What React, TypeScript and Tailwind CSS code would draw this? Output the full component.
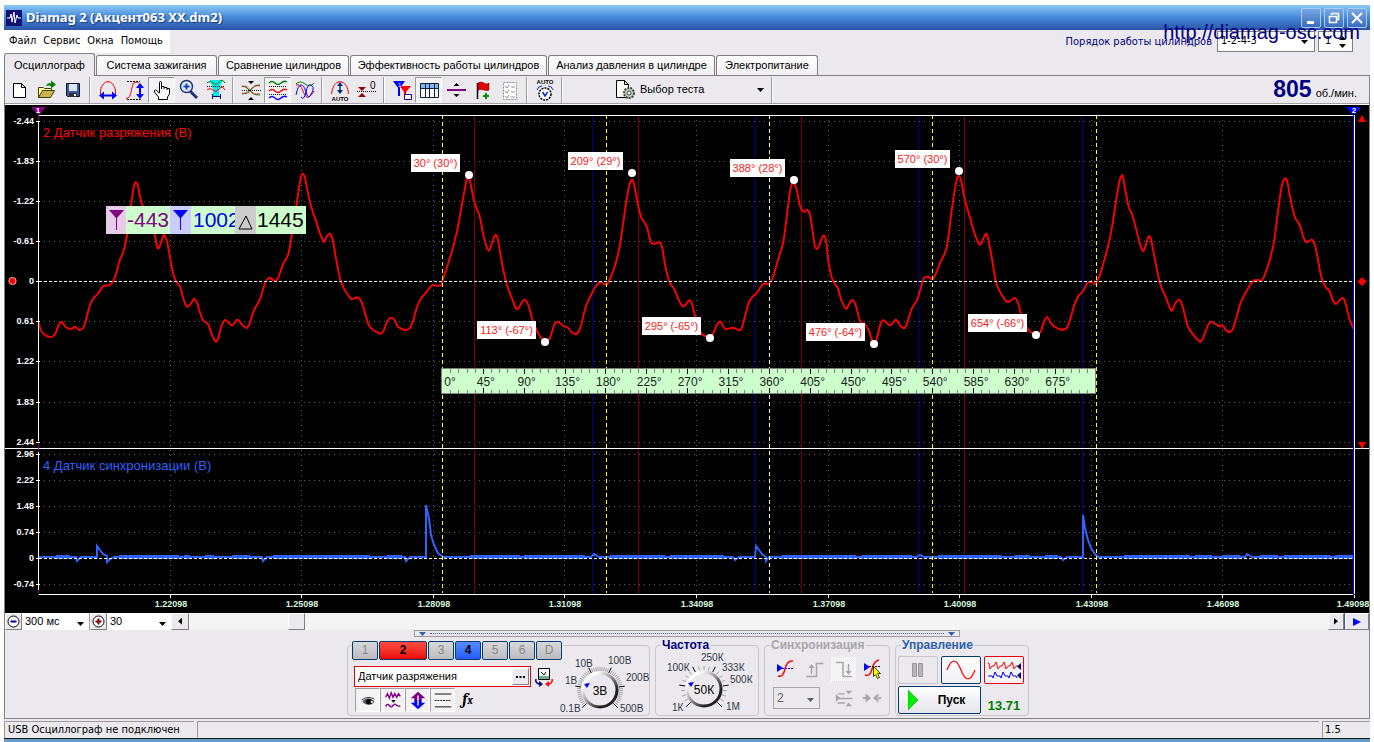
import { useState } from "react";
import type { ReactNode } from "react";

const TABS = [
	{ title: "Осциллограф", width: "w-[91px]" },
	{ title: "Система зажигания", width: "w-[121px]" },
	{ title: "Сравнение цилиндров", width: "w-[131px]" },
	{ title: "Эффективность работы цилиндров", width: "w-[197px]" },
	{ title: "Анализ давления в цилиндре", width: "w-[167px]" },
	{ title: "Электропитание", width: "w-[102px]" },
];

const CHECKER =
	"bg-[repeating-conic-gradient(#ffffff_0_25%,#ebe9ed_0_50%)] bg-[length:2px_2px]";

/* ---------- waveform data ---------- */

// Samples are stored in thirds of a pixel, relative to the segment's origin
const VACUUM = [
	{
		origin: 0,
		data: "117,668 122,690 132,702 148,711 160,708 168,697 176,674 186,666 196,680 212,687 226,681 238,690 250,683 258,660 268,622 278,598 295,580 310,558 328,556 340,543 350,515 358,485 368,460 374,440 381,405 388,350 394,310 402,258 408,247 414,258 420,290 426,312 445,360 464,405 470,435 476,445 484,425 492,405 500,420 508,460 516,505 526,540 540,560 550,595 560,620 572,612 582,597 592,610 600,638 610,662 624,672 636,705 648,725 656,710 664,680 676,660 696,676 712,659 726,674 740,684 750,668 760,635 780,598 790,565 800,540 810,533 824,543 836,530 848,495 864,465 872,425 880,375 890,310 900,245 908,221 916,238 926,290 938,335 948,362 958,395 972,426 980,410 990,401 998,420 1008,475 1020,535 1030,562 1042,582 1054,597 1074,592 1084,605 1094,635 1104,670 1114,685 1128,695 1142,701 1152,690 1160,668 1172,653 1184,660 1194,680 1216,690 1230,684 1240,660 1252,618 1264,595 1280,575 1296,556 1312,557 1324,556",
	},
	{
		origin: 400,
		data: "128,540 140,505 158,445 172,390 182,335 192,280 200,240 208,238 214,262 224,310 238,345 248,395 258,435 266,452 274,435 284,407 292,412 300,455 310,510 324,565 336,595 346,622 354,627 364,610 374,599 386,618 396,655 412,695 422,712 434,724 448,718 456,695 464,672 474,665 490,678 502,682 514,695 526,703 536,695 546,665 556,625 566,600 578,575 588,558 602,546 610,551 622,552 632,530 644,500 658,445 668,380 678,310 688,255 697,239 704,262 714,315 724,352 740,380 754,428 770,429 778,426 786,440 796,498 808,545 824,570 834,595 848,619 858,612 868,601 876,612 886,650 896,680 906,702 930,712 942,695 952,672 962,665 976,687 1000,683 1018,691 1026,682 1036,645 1048,605 1060,588 1070,580 1090,552 1108,551 1120,528 1134,480 1150,425 1160,350 1170,275 1178,245",
	},
	{
		origin: 740,
		data: "162,250 170,268 180,318 192,336 202,329 210,345 218,395 224,435 232,447 240,430 250,407 258,422 266,490 278,540 294,566 304,600 318,626 326,615 336,600 346,612 360,662 374,672 386,690 394,715 404,728 412,710 422,670 432,661 450,676 468,659 480,676 494,684 504,660 516,625 532,598 542,565 552,535 564,530 578,538 588,520 602,485 618,450 628,390 638,310 650,240 658,229 664,245 676,305 688,345 702,395 718,433 728,420 738,401 744,415 754,465 768,545 784,582 802,606 814,600 826,594 836,615 844,645 864,688 888,703 902,695 912,665 922,651 932,668 944,680 964,689 980,684 990,660 1002,618 1014,590 1028,575 1040,552 1052,545 1066,552 1078,530 1090,490 1105,435 1118,370 1130,290 1138,245",
	},
	{
		origin: 1060,
		data: "182,232 188,227 194,260 206,320 216,342 228,385 238,425 248,453 256,440 266,409 274,422 284,475 300,550 316,588 334,631 346,610 358,599 368,620 384,680 400,704 420,725 430,712 440,685 452,665 476,678 488,676 498,690 508,697 518,688 530,650 542,608 556,580 578,545 592,540 606,541 616,520 630,478 642,425 652,350 664,265 674,236 682,245 690,290 704,350 718,372 730,410 740,427 756,419 766,440 774,480 784,530 796,560 808,572 818,600 828,612 838,602 850,594 858,615 868,655 880,686",
	},
];

const samples = VACUUM.flatMap(segment =>
	segment.data.split(" ").map(pair => {
		const [x, y] = pair.split(",").map(Number);
		return [segment.origin + x / 3, 100 + y / 3];
	}),
);

// Catmull-Rom through all samples
const vacuumPath = samples
	.map(([x, y], i) => {
		if (i === 0) return `M${x.toFixed(1)},${y.toFixed(1)}`;
		const before = samples[Math.max(i - 2, 0)];
		const prev = samples[i - 1];
		const next = samples[Math.min(i + 1, samples.length - 1)];
		return [
			`C${(prev[0] + (x - before[0]) / 6).toFixed(1)},${(prev[1] + (y - before[1]) / 6).toFixed(1)}`,
			`${(x - (next[0] - prev[0]) / 6).toFixed(1)},${(y - (next[1] - prev[1]) / 6).toFixed(1)}`,
			`${x.toFixed(1)},${y.toFixed(1)}`,
		].join(" ");
	})
	.join("");

const SYNC_PATH =
	"M39,557H76l1,4 4,-4H97V546l3,4 3,4 4,2v6l3,-3 4,-2H262l1,4 4,-4H405l1,4 4,-4H426V505l3,14 2,16 3,10 4,8 5,4H591l3,-3 5,3H733l2,3 4,-3H755l1,-11 3,4 3,4 4,3v4l3,-4H917l3,-2 4,2H1061l2,3 4,-3H1083V515l2,13 3,12 3,8 4,6 3,3H1245l2,-3 5,3H1354";

const NOISE = [
	[56, 70], [119, 179], [184, 190], [205, 214], [232, 250], [273, 370], [387, 402],
	[470, 520], [524, 585], [610, 665], [670, 724], [782, 856], [862, 912], [938, 1001],
	[1015, 1030], [1045, 1058], [1124, 1190], [1195, 1212], [1222, 1240], [1260, 1278],
	[1284, 1330], [1335, 1353],
];

const GRID_X = [170, 301, 433, 564, 696, 828, 959, 1091, 1222];
const TIME_LABELS = [
	"1.22098", "1.25098", "1.28098", "1.31098", "1.34098",
	"1.37098", "1.40098", "1.43098", "1.46098", "1.49098",
];
const UPPER_SCALE: [number, string][] = [
	[121, "-2.44"], [161, "-1.83"], [201, "-1.22"], [241, "-0.61"], [281, "0"],
	[321, "0.61"], [361, "1.22"], [402, "1.83"], [442, "2.44"],
];
const LOWER_SCALE: [number, string][] = [
	[454, "2.96"], [480, "2.22"], [506, "1.48"], [532, "0.74"], [558, "0"], [584, "-0.74"],
];

const MARKS = [
	{ x: 411, y: 154, w: 49, text: "30° (30°)", px: 469, py: 175 },
	{ x: 477, y: 321, w: 59, text: "113° (-67°)", px: 545, py: 342 },
	{ x: 568, y: 152, w: 55, text: "209° (29°)", px: 632, py: 173 },
	{ x: 642, y: 317, w: 59, text: "295° (-65°)", px: 710, py: 338 },
	{ x: 730, y: 159, w: 55, text: "388° (28°)", px: 794, py: 180 },
	{ x: 806, y: 323, w: 59, text: "476° (-64°)", px: 874, py: 344 },
	{ x: 895, y: 150, w: 55, text: "570° (30°)", px: 959, py: 171 },
	{ x: 968, y: 314, w: 59, text: "654° (-66°)", px: 1036, py: 335 },
];

function Scope() {
	return (
		<div className="relative bg-black">
			<svg viewBox="5 105 1364 508" className="block w-full h-auto" fontFamily="Liberation Sans, Arial, sans-serif">
				{/* Grid */}
				<g stroke="#5c5c5c" strokeDasharray="1 4" shapeRendering="crispEdges">
					{GRID_X.map(x => (
						<line key={x} x1={x + 0.5} x2={x + 0.5} y1="120" y2="594" />
					))}
					{[...UPPER_SCALE, ...LOWER_SCALE].map(([y]) => (
						<line key={y} x1="44" x2="1354" y1={y + 0.5} y2={y + 0.5} />
					))}
				</g>

				{/* Cylinder bounds */}
				<g shapeRendering="crispEdges">
					{[474, 638, 801, 964].map(x => (
						<line key={x} x1={x + 0.5} x2={x + 0.5} y1="116" y2="594" stroke="#800000" />
					))}
					{[592, 755, 918, 1082].map(x => (
						<line key={x} x1={x + 0.5} x2={x + 0.5} y1="116" y2="594" stroke="#000090" />
					))}
				</g>

				<path d={vacuumPath} fill="none" stroke="#ff0000" strokeWidth="1.900" strokeLinejoin="round" />
				<path d={SYNC_PATH} fill="none" stroke="#2f62ff" strokeWidth="2" />
				{NOISE.map(([a, b]) => (
					<line key={a} x1={a} x2={b} y1="557" y2="557" stroke="#2f62ff" strokeWidth="4" />
				))}

				<g shapeRendering="crispEdges">
					{[442, 606, 769, 932, 1096].map(x => (
						<line
							key={x}
							x1={x + 0.5}
							x2={x + 0.5}
							y1="115"
							y2="593"
							stroke={x === 769 ? "#ffffb0" : "#ffff00"}
							strokeDasharray="4 3"
						/>
					))}
					<path d="M39 281.5H1354M39 558.5H1354" stroke="#fff" strokeDasharray="3 2" />
					{/* Frame */}
					<path d="M38 115.5H1354M5 448.5H1369M38 594.5H1354M38.5 118V594M1354.5 115V594" stroke="#fff" fill="none" />
					<path d="M38.5 112V122M38.5 441V452M38.5 590V595" stroke="#800080" />
					<path d="M1353.5 112V595" stroke="#0000ff" />
					{[...UPPER_SCALE, ...LOWER_SCALE].map(([y]) => (
						<line key={y} x1="36" x2="40" y1={y + 0.5} y2={y + 0.5} stroke="#fff" />
					))}
					{[...GRID_X, 1354].map(x => (
						<line key={x} x1={x + 0.5} x2={x + 0.5} y1="595" y2="598" stroke="#fff" />
					))}
				</g>

				{/* Cursor heads and level markers */}
				<path d="M31 107h15l-6 7h-3z" fill="#800080" />
				<path d="M1346 107h15l-6 7h-3z" fill="#0000ff" />
				<g fill="#fff" fontSize="8" fontWeight="700" textAnchor="middle">
					<text x="38" y="113">1</text>
					<text x="1354" y="113">2</text>
				</g>
				<g fill="#ff0000">
					<circle cx="12.500" cy="281" r="3.600" stroke="#ffb0b0" />
					<path d="M1362 115l4 7h-8zM1362 449l4 -7h-8zM1362 277l4.500 4.500l-4.500 4.500l-4.500 -4.500z" />
				</g>

				{/* Scales */}
				<g fill="#fff" fontSize="9" fontWeight="700" textAnchor="end">
					{[...UPPER_SCALE, ...LOWER_SCALE].map(([y, label]) => (
						<text key={y} x="34" y={y + 3}>{label}</text>
					))}
				</g>
				<g fill="#d8f4dc" fontSize="9" fontWeight="700" textAnchor="middle">
					{TIME_LABELS.map((label, i) => (
						<text key={label} x={i < 9 ? GRID_X[i] + 1 : 1353} y="607">{label}</text>
					))}
				</g>

				<text x="43" y="137" fill="#ff0000" fontSize="13">2 Датчик разряжения (В)</text>
				<text x="43" y="470" fill="#2f62ff" fontSize="13">4 Датчик синхронизации (В)</text>

				{/* Extremum marks */}
				{MARKS.map(mark => (
					<g key={mark.text}>
						<rect x={mark.x} y={mark.y} width={mark.w} height="18" fill="#fff" />
						<text x={mark.x + mark.w / 2} y={mark.y + 13} fill="#ff2020" fontSize="11" textAnchor="middle">
							{mark.text}
						</text>
						<circle cx={mark.px} cy={mark.py} r="4" fill="#fff" />
					</g>
				))}

				{/* Crank angle ruler */}
				<rect x="441.500" y="368.500" width="654" height="25" fill="#ccffcc" stroke="#808080" />
				{Array.from({ length: 79 }, (_, i) => i + 1).map(i => {
					const x = Math.round(442 + i * 8.17) + 0.5;
					const major = i % 5 === 0;
					return (
						<path
							key={i}
							d={major ? `M${x} 369v5M${x} 393v-5` : `M${x} 369v4M${x} 393v-3`}
							stroke={major ? "#000" : "#808080"}
						/>
					);
				})}
				<g fontSize="12" fill="#202020" textAnchor="middle">
					{Array.from({ length: 16 }, (_, i) => (
						<text key={i} x={i === 0 ? 450 : 445 + i * 40.85} y="386">{`${i * 45}°`}</text>
					))}
				</g>
			</svg>

			{/* Cursor readout */}
			<div className="absolute left-[101px] top-[101px] flex h-7 w-[200px] overflow-hidden bg-[#ccffcc] text-[21px] leading-[27px]">
				<span className="flex w-5 shrink-0 bg-[#e6cce6]">
					<svg viewBox="0 0 20 28" className="w-5 h-7"><path d="M3 4h15l-7 8v12h-1V12z" fill="#800080" /></svg>
				</span>
				<span className="w-11 shrink-0 overflow-hidden pl-px text-[#800080]">-443</span>
				<span className="flex w-[21px] shrink-0 bg-[#ccccff]">
					<svg viewBox="0 0 20 28" className="w-5 h-7"><path d="M3 4h15l-7 8v12h-1V12z" fill="#0000ff" /></svg>
				</span>
				<span className="w-11 shrink-0 overflow-hidden pl-0.5 text-[#0000e0]">1002</span>
				<span className="flex w-[21px] shrink-0 bg-[#cccccc]">
					<svg viewBox="0 0 20 28" className="w-5 h-7"><path d="M11 10l6 13H4z" fill="none" stroke="#000" /></svg>
				</span>
				<span className="pl-px">1445</span>
			</div>
		</div>
	);
}

/* ---------- toolbar ---------- */

const ICONS: Record<string, ReactNode> = {
	"Новый": <path d="M7.500 5.500h8l4 4v10h-12zM15.500 5.500v4h4" fill="#fff" stroke="#000" />,
	"Открыть": (
		<>
			<path d="M5.500 19.500v-10h5l1 1h7v3" fill="#ffff99" stroke="#404000" />
			<path d="M5.500 19.500l4-7h12l-4 7z" fill="#c8b450" stroke="#404000" />
			<path d="M13 8q2-4 5-2.500V2.500l5 4-5 4V8q-2-1-5 0z" fill="#008000" />
		</>
	),
	"Сохранить": (
		<>
			<path d="M6.500 5.500h13v13h-12l-1-1z" fill="#3a5a9a" stroke="#101030" />
			<path d="M9 6h8v7H9z" fill="#dde4f4" />
			<path d="M9 15h8v4H9z" fill="#303030" />
			<path d="M14 16h2v2h-2z" fill="#fff" />
		</>
	),
	"Развёртка": (
		<>
			<path d="M5.500 16V12q2-8 7.500-8.500q5.500.5 7.500 8.500v4" fill="none" stroke="#f00" />
			<path d="M6 17.500h14" stroke="#00f" strokeWidth="2" />
			<path d="M4 17.500l5-4v8zM22 17.500l-5-4v8z" fill="#00f" />
		</>
	),
	"Усиление": (
		<>
			<path d="M4 20.500c7 0 4-16 10-16.500c4 0 4 4 4 6" fill="none" stroke="#f00" />
			<path d="M5 3.500h13M5 21.500h15" stroke="#000" strokeDasharray="2 1" />
			<path d="M18 7v12" stroke="#00f" strokeWidth="2" />
			<path d="M18 5l4 5h-8zM18 21l4-5h-8z" fill="#00f" />
		</>
	),
	"Рука": (
		<path
			d="M10.500 13V4.500q0-1 1-1t1 1V11M12.500 10V8.500h2.500V11M15 9.500h3V12M18 10.500h2.500V16l-2 3v2.500h-9V19l-4-5q-.5-2 1-2t2 1.500l2 1.500v-2"
			fill="#fff"
			stroke="#000"
		/>
	),
	"Масштаб": (
		<>
			<path d="M14 13l7 7" stroke="#203080" strokeWidth="3" />
			<circle cx="10.500" cy="8.500" r="6" fill="#d8ecff" stroke="#203070" strokeWidth="1.500" />
			<path d="M7.500 8.500h6M10.500 5.500v6" stroke="#2040c0" strokeWidth="2" />
		</>
	),
	"Вырезать участок": (
		<>
			<path d="M7 2h13l-4 9v7h-6v-7z" fill="#00e8f0" />
			<path d="M4 5q3-3 6 0t6-1t6 1" fill="none" stroke="#008000" />
			<path d="M4 12q3-3 6 0t6-1t6 1" fill="none" stroke="#f00" />
			<path d="M4 8.500h18" stroke="#000" strokeDasharray="1 1" />
			<path d="M9.500 16v5M17.500 16v5M9 18.500h9" stroke="#000090" />
		</>
	),
	"Нормировать": (
		<>
			<path d="M4 8q4 0 8 5t10 4M4 16q5 0 9-5t9-4" fill="none" stroke="#008000" />
			<path d="M4 9q4-3 8 3t10 3M4 15q5 2 9-3t9-4" fill="none" stroke="#f00" strokeDasharray="2 1" />
			<path d="M4 12.500h19" stroke="#000" strokeDasharray="1 1" />
			<path d="M13 6l-3-3h6zM13 19l-3 3h6z" />
		</>
	),
	"Разделить": (
		<>
			<path d="M4 5q3-3 6 0t6 0t6-1" fill="none" stroke="#008000" strokeWidth="1.500" />
			<path d="M4 13q3-3 6 0t6 0t6-1" fill="none" stroke="#f00" strokeWidth="1.500" />
			<path d="M4 20q3-3 6 0t6 0t6-1" fill="none" stroke="#00f" strokeWidth="1.500" />
			<path d="M4 8.500h18M4 16.500h18" stroke="#000" strokeDasharray="1 1" />
		</>
	),
	"Наложить": (
		<>
			<path d="M4 6q4-4 9 0t9-1" fill="none" stroke="#008000" />
			<path d="M4 7q4-2 7 6t6 6t5-6" fill="none" stroke="#f00" />
			<path d="M4 17q2-10 5-10t5 7t4 4t3-6t-2-5t-5 7t-5 5" fill="none" stroke="#00f" />
		</>
	),
	"Авто": (
		<>
			<path d="M4.500 16q1-11 8.500-12.500q8 1.500 8.500 12.500" fill="none" stroke="#f00" />
			<path d="M13 6v9" stroke="#003080" strokeWidth="1.500" />
			<path d="M13 4l3 4h-6zM13 16l3-4h-6z" fill="#003080" />
			<text x="13" y="23" fontSize="6" fontWeight="700" textAnchor="middle">AUTO</text>
		</>
	),
	"Ноль": (
		<>
			<path d="M3 13.500h19" stroke="#000" strokeDasharray="1 1" />
			<path d="M8 13L4 9h8zM8 15l-4 4h8z" fill="#900" />
			<text x="16" y="11" fontSize="10">0</text>
		</>
	),
	"Метки": (
		<>
			<path d="M4 3h12l-5 7v8h-2v-8z" fill="#00f" />
			<path d="M11 8h11l-5 6v4h-2v-4z" fill="#f00" />
			<text x="9" y="9" fontSize="6" fill="#fff">1</text>
			<path d="M15.500 16.500h7v5h-7z" fill="#fff" stroke="#208" />
		</>
	),
	"Таблица": (
		<>
			<path d="M4.500 5.500h18v14h-18z" fill="#fff" stroke="#102040" />
			<path d="M5 6h17v4H5z" fill="#80b8f0" />
			<path d="M4 10.500h19M9.500 6v14M13.500 6v14M18.500 6v14" stroke="#102040" />
		</>
	),
	"Разделитель": (
		<>
			<path d="M4 12h19" stroke="#800080" strokeWidth="2" />
			<path d="M13.500 5l3 3h-6zM13.500 19l3-3h-6z" />
		</>
	),
	"Флаг": (
		<>
			<path d="M7.500 5v16" stroke="#000" strokeWidth="1.500" />
			<path d="M8 5q3-2 6 0t5 0v7q-2 1-5 0t-6 0z" fill="#e00000" stroke="#600" strokeWidth="0.500" />
			<path d="M13 18h6M16 15v6" stroke="#009000" strokeWidth="2" />
		</>
	),
	"Отчёт": (
		<>
			<path d="M6.500 4.500h13v17h-13z" fill="#fff" stroke="#909090" strokeDasharray="2 1" />
			<path d="M8 8l2 2 2-3M8 13l2 2 2-3M8 18l2 2 2-3M14 9h4M14 14h4M14 19h4" fill="none" stroke="#909090" />
		</>
	),
	"Автонастройка": (
		<>
			<text x="13" y="6" fontSize="6" fontWeight="700" textAnchor="middle">AUTO</text>
			<circle cx="13" cy="16" r="6" fill="#fff" stroke="#000" strokeWidth="1.500" strokeDasharray="2 1" />
			<path d="M10.500 14l2.500 4 2.500-4" fill="none" stroke="#0030d0" strokeWidth="1.500" />
			<path d="M5 12q1-4 5-4M21 12q-1-4-5-4" fill="none" stroke="#0030d0" />
		</>
	),
};

const TOOL_GROUPS = [
	["Новый", "Открыть", "Сохранить"],
	["Развёртка", "Усиление", "Рука", "Масштаб", "Вырезать участок"],
	["Нормировать", "Разделить", "Наложить"],
	["Авто", "Ноль"],
	["Метки", "Таблица", "Разделитель", "Флаг", "Отчёт"],
	["Автонастройка"],
];

function Separator() {
	return <div className="mx-[3px] h-[26px] w-0.5 border-l border-[#9c9a9e] bg-white" />;
}

function Toolbar() {
	const [pressed, setPressed] = useState<string[]>(["Рука", "Разделить", "Таблица"]);

	const toggle = (name: string) => {
		setPressed(prev =>
			prev.includes(name) ? prev.filter(item => item !== name) : [...prev, name],
		);
	};

	return (
		<div className="flex h-7 items-center border-b border-[#a09ea2]">
			{TOOL_GROUPS.map(group => (
				<div key={group[0]} className="flex items-center">
					{group.map(name => (
						<button
							key={name}
							aria-label={name}
							onClick={() => toggle(name)}
							className={`flex h-[26px] w-[27px] items-center justify-center ${
								pressed.includes(name)
									? `border border-[#9c9a9e] border-r-white border-b-white ${CHECKER}`
									: ""
							}`}
						>
							<svg viewBox="0 0 26 24" width="26" height="24" className="shrink-0">{ICONS[name]}</svg>
						</button>
					))}
					<Separator />
				</div>
			))}
			<button className="ml-[46px] flex h-[26px] w-[156px] items-center text-[11px]">
				<svg viewBox="0 0 26 24" width="26" height="24" className="shrink-0">
					<path d="M4.500 2.500h8l4 4v13h-12zM12.500 2.500v4h4" fill="#fff" stroke="#000" />
					<circle cx="17" cy="15" r="5" fill="#c0ccc0" stroke="#404840" strokeWidth="2" strokeDasharray="2 1" />
					<circle cx="17" cy="15" r="2" fill="#fff" stroke="#404840" />
				</svg>
				<span className="grow pl-0.5 text-left">Выбор теста</span>
				<svg viewBox="0 0 7 4" className="mr-1 w-[7px]"><path d="M0 0h7L3.500 4z" /></svg>
			</button>
			<Separator />
			<div className="ml-auto flex items-baseline gap-1 pr-3 text-[11px]">
				<strong className="text-[23px] leading-6 text-[#000080]">805</strong>
				<span>об./мин.</span>
			</div>
		</div>
	);
}

/* ---------- small controls ---------- */

function Combo({ label, options, className }: { label: string; options: string[]; className: string }) {
	return (
		<div className={`relative ${className}`}>
			<select aria-label={label} className="block h-full w-full appearance-none bg-transparent pl-[3px] outline-none">
				{options.map(option => (
					<option key={option}>{option}</option>
				))}
			</select>
			<svg viewBox="0 0 7 4" className="pointer-events-none absolute right-[5px] top-1/2 w-[7px]">
				<path d="M0 0h7L3.500 4z" fill="currentColor" />
			</svg>
		</div>
	);
}

function ScrollRow() {
	const raised = "border border-white border-r-[#808080] border-b-[#808080] bg-[#ebe9ed]";
	return (
		<div className="flex h-[17px] items-stretch bg-[#ebe9ed] text-[11px]">
			<button aria-label="Уменьшить" className={`flex w-[17px] items-center justify-center ${raised}`}>
				<svg viewBox="0 0 13 13" className="w-[13px] shrink-0">
					<circle cx="6.500" cy="6.500" r="5.500" fill="#fff" stroke="#000" />
					<path d="M3.500 6.500h6" stroke="#000080" strokeWidth="2" />
				</svg>
			</button>
			<Combo label="Длительность" options={["300 мс"]} className="w-[67px] bg-white" />
			<div className="w-px bg-[#9c9a9e]" />
			<button aria-label="Увеличить" className={`flex w-[17px] items-center justify-center ${raised}`}>
				<svg viewBox="0 0 13 13" className="w-[13px] shrink-0">
					<circle cx="6.500" cy="6.500" r="5.500" fill="#fff" stroke="#000" />
					<path d="M3.500 6.500h6M6.500 3.500v6" stroke="#800000" strokeWidth="2" />
				</svg>
			</button>
			<Combo label="Масштаб времени" options={["30"]} className="w-[64px] bg-white" />
			<button aria-label="Влево" className={`flex w-[18px] items-center justify-center ${raised}`}>
				<svg viewBox="0 0 5 8" className="w-[4px]"><path d="M5 0v8L0 4z" /></svg>
			</button>
			<input
				type="range"
				aria-label="Прокрутка"
				max={1000}
				defaultValue={88}
				className={`h-full min-w-0 grow appearance-none ${CHECKER} [&::-webkit-slider-thumb]:h-[17px] [&::-webkit-slider-thumb]:w-[17px] [&::-webkit-slider-thumb]:appearance-none [&::-webkit-slider-thumb]:border [&::-webkit-slider-thumb]:border-white [&::-webkit-slider-thumb]:border-r-[#808080] [&::-webkit-slider-thumb]:border-b-[#808080] [&::-webkit-slider-thumb]:bg-[#ebe9ed]`}
			/>
			<button aria-label="Вправо" className={`flex w-4 items-center justify-center ${raised}`}>
				<svg viewBox="0 0 5 8" className="w-[4px]"><path d="M0 0v8l5-4z" /></svg>
			</button>
			<div className="w-px bg-[#2f5fae]" />
			<button aria-label="Воспроизвести" className={`flex w-6 items-center justify-center ${raised}`}>
				<svg viewBox="0 0 8 8" className="w-2"><path d="M0 0v8l8-4z" fill="#00f" /></svg>
			</button>
		</div>
	);
}

/* ---------- control panel ---------- */

function Knob({
	cx,
	value,
	labels,
	view,
	className,
	fine,
}: {
	cx: number;
	value: string;
	labels: [number, number, string][];
	view: string;
	className: string;
	fine?: boolean;
}) {
	const cy = 690;
	const count = fine ? 51 : 21;
	return (
		<svg viewBox={view} className={className} fontFamily="Liberation Sans, Arial, sans-serif">
			<defs>
				<linearGradient id={`rim${cx}`} x1="0" y1="0" x2="1" y2="1">
					<stop offset="0.2" stopColor="#fff" />
					<stop offset="0.45" stopColor="#a0a0a0" />
					<stop offset="0.75" stopColor="#202020" />
				</linearGradient>
			</defs>
			{Array.from({ length: count }, (_, i) => {
				const a = ((135 + (270 * i) / (count - 1)) * Math.PI) / 180;
				const major = i % ((count - 1) / 5) === 0;
				return (
					<line
						key={i}
						x1={cx + 19 * Math.cos(a)}
						y1={cy + 19 * Math.sin(a)}
						x2={cx + (major ? 25 : 23) * Math.cos(a)}
						y2={cy + (major ? 25 : 23) * Math.sin(a)}
						stroke={major ? "#000" : "#a4a2a6"}
						strokeWidth={1}
					/>
				);
			})}
			<circle cx={cx} cy={cy} r="17" fill="#ebe9ed" stroke={`url(#rim${cx})`} strokeWidth="3" />
			<path d={`M${cx - 16} ${cy - 6}l6 -1l-3 5z`} fill="#0000ff" />
			<text x={cx} y={cy + 5} fontSize="12" textAnchor="middle">{value}</text>
			<g fontSize="10" fill="#303848">
				{labels.map(([x, y, text]) => (
					<text key={text} x={x} y={y}>{text}</text>
				))}
			</g>
		</svg>
	);
}

const CHANNELS = ["1", "2", "3", "4", "5", "6", "D"];

const TRACE_TOGGLES: [string, ReactNode][] = [
	["Показать", (
		<>
			<path d="M6 13q6-6 13 0q-1 4-6 4q-6 0-7-4z" fill="#605860" />
			<path d="M5 12q7-5 14-1" fill="none" stroke="#302830" />
			<circle cx="13" cy="14" r="3" />
			<path d="M15 13h2v2h-2z" fill="#fff" />
		</>
	)],
	["Сглаживание", (
		<>
			<path d="M4 9l2-4 2 5 2-6 2 5 2-4 2 4 2-4 2 3M4 19q2-4 4-1t4 0t4 0l4 1" fill="none" stroke="#800080" strokeWidth="1.500" />
			<path d="M10 12h5l-2.500 3z" />
		</>
	)],
	["Инверсия", (
		<>
			<path d="M12 3l8 7h-4v2H8v-2H4z" fill="#800080" />
			<path d="M12 22l8-7h-4v-3H8v3H4z" fill="#00f" />
			<path d="M12 7v11" stroke="#fff" strokeWidth="1.500" />
		</>
	)],
	["Уровни", <path d="M3 5.500h18M3 19.500h18M3 12.500h2m1 0h2m1 0h2m1 0h2m1 0h2m1 0h2" stroke="#000" />],
];

function ChannelPanel() {
	const [channel, setChannel] = useState("2");
	return (
		<section className="flex h-[71px] w-[303px] rounded-[4px] border border-[#c8c6ca]">
			<div className="-mt-[5px] w-[216px] shrink-0 pl-1">
				<div className="flex gap-px bg-[#ebe9ed]">
					{CHANNELS.map(item => (
						<button
							key={item}
							onClick={() => setChannel(item)}
							className={`h-[19px] rounded-[2px] border border-[#003c74] text-[12px] leading-[17px] ${
								item === channel
									? "w-12 bg-linear-to-b from-[#ff4a40] to-[#e80000] font-bold"
									: item === "4"
										? "w-[26px] bg-linear-to-b from-[#5a8cff] to-[#2458ff] font-bold"
										: "w-[26px] bg-linear-to-b from-[#d8d8da] to-[#bcbcc0] text-[#888]"
							}`}
						>
							{item}
						</button>
					))}
				</div>
				<div className="mt-1.5 flex items-center gap-[3px] pl-0.5">
					<div className="flex h-[21px] w-[177px] items-center border border-red-600 bg-white pr-px">
						<input
							aria-label="Название канала"
							defaultValue="Датчик разряжения"
							className="h-4 min-w-0 grow bg-transparent pl-[3px] text-[11px] outline-none"
						/>
						<button aria-label="Выбрать датчик" className="flex h-[17px] w-[17px] items-center justify-center border border-white border-r-[#808080] border-b-[#808080] bg-[#ebe9ed]">
							<svg viewBox="0 0 9 2" className="w-[9px]"><path d="M0 0h2v2H0zM3.500 0h2v2h-2zM7 0h2v2H7z" /></svg>
						</button>
					</div>
					<button aria-label="Сменить датчик">
						<svg viewBox="0 0 20 20" width="20" height="20">
							<path d="M4.500 1.500h11v11h-11z" fill="#fff" stroke="#000" />
							<path d="M5 9h10v3H5z" fill="#70b090" />
							<path d="M7 5l3 3 2-3" fill="none" stroke="#000" />
							<path d="M2 12q-1 4 3 5h2" fill="none" stroke="#000080" strokeWidth="1.500" />
							<path d="M5 14v6l4-3z" fill="#000080" />
							<path d="M18 12q1 4-3 5h-1" fill="none" stroke="#f00" strokeWidth="1.500" />
							<path d="M15 14v6l-4-3z" fill="#f00" />
						</svg>
					</button>
				</div>
				<div className="mt-px flex pl-[3px]">
					{TRACE_TOGGLES.map(([name, icon]) => (
						<button
							key={name}
							aria-label={name}
							className={`flex h-6 w-[25px] items-center justify-center border border-[#a09ea2] border-r-white border-b-white ${CHECKER}`}
						>
							<svg viewBox="0 0 24 24" width="22" height="22" className="shrink-0">{icon}</svg>
						</button>
					))}
					<button className="w-[25px] text-center font-serif text-[16px] leading-5 font-bold italic">
						f<span className="text-[11px]">x</span>
					</button>
				</div>
			</div>
			<Knob
				cx={600}
				value="3В"
				fine
				view="564 646 85 69"
				className="h-[69px] w-[85px] shrink-0 overflow-visible"
				labels={[[575, 667, "10В"], [608, 664, "100В"], [626, 681, "200В"], [620, 712, "500В"], [560, 712, "0.1В"], [565, 684, "1В"]]}
			/>
		</section>
	);
}

function Group({ title, color, className, children }: { title: string; color: string; className: string; children: ReactNode }) {
	return (
		<fieldset className={`-mt-[6px] h-[77px] rounded-[4px] border border-[#c8c6ca] ${className}`}>
			<legend className={`ml-[5px] h-[13px] px-px text-[12px] leading-[13px] font-bold whitespace-nowrap ${color}`}>{title}</legend>
			{children}
		</fieldset>
	);
}

const SYNC_ICONS: [string, ReactNode, string][] = [
	["Синхронизация по уровню", (
		<>
			<path d="M4 19q5 2 7-7t8-8" fill="none" stroke="#f00" strokeWidth="1.500" />
			<path d="M3 7l6 4-6 4z" fill="#00f" />
			<path d="M8 11.500h12" stroke="#00f" strokeDasharray="2 1" />
		</>
	), ""],
	["По фронту", <><path d="M3 19.500h10.500v-13h7" fill="none" stroke="#a8a6aa" strokeWidth="1.500" /><path d="M8.500 10v7" stroke="#a8a6aa" strokeWidth="1.500" /><path d="M8.500 7l3 4h-6z" fill="#a8a6aa" /></>, ""],
	["По спаду", <><path d="M4 5.500h7v14h9" fill="none" stroke="#a8a6aa" strokeWidth="1.500" /><path d="M16.500 7v8" stroke="#a8a6aa" strokeWidth="1.500" /><path d="M16.500 18l3-4h-6z" fill="#a8a6aa" /></>, CHECKER],
	["Выбрать уровень", (
		<>
			<path d="M4 18q5 2 7-6t7-9" fill="none" stroke="#f00" strokeWidth="1.500" />
			<path d="M3 6l6 4-6 4z" fill="#00f" />
			<path d="M8 9.500h12" stroke="#000" strokeDasharray="2 1" />
			<path d="M12.500 9.500v10l2-2 2 4 2-1-2-4h3z" fill="#ff0" stroke="#404000" />
		</>
	), ""],
];

function ControlPanel() {
	const control = "flex h-7 items-center justify-center rounded-[2px] border";
	return (
		<div className="ml-[342px] flex gap-[5px] pt-2">
			<ChannelPanel />
			<Group title="Частота" color="text-[#000080]" className="w-[104px]">
				<Knob
					cx={704}
					value="50К"
					view="656 652 102 63"
					className="-mt-px h-[63px] w-[102px]"
					labels={[[701, 662, "250К"], [722, 672, "333К"], [730, 684, "500К"], [726, 711, "1М"], [672, 712, "1К"], [667, 672, "100К"]]}
				/>
			</Group>
			<Group title="Синхронизация" color="text-[#a8a6aa]" className="w-[126px]">
				<div className="flex gap-1 pt-[5px] pl-2">
					{SYNC_ICONS.map(([name, icon, look]) => (
						<button key={name} aria-label={name} className={`flex h-6 w-[25px] items-center justify-center ${look}`}>
							<svg viewBox="0 0 24 24" width="24" height="24">{icon}</svg>
						</button>
					))}
				</div>
				<div className="flex items-center pt-1.5 pl-2">
					<Combo label="Канал синхронизации" options={["2"]} className="h-[22px] w-[47px] border border-[#a8a6aa] text-[12px] text-[#606060]" />
					<svg viewBox="0 0 24 24" width="24" height="22" className="ml-3">
						<path d="M5 7.500h8M5 12.500h16M5 17.500h8" stroke="#a8a6aa" strokeWidth="1.500" />
						<path d="M3 8l5 4-5 4zM17 8l-3-4h7zM17 17l-3 4h7z" fill="#a8a6aa" />
					</svg>
					<svg viewBox="0 0 24 24" width="24" height="22" className="ml-1">
						<path d="M5 7l6 5-6 5zM19 7l-6 5 6 5zM2 11h4v2H2zM18 11h4v2h-4z" fill="#a8a6aa" />
					</svg>
				</div>
			</Group>
			<Group title="Управление" color="text-[#2f5fae]" className="w-[134px]">
				<div className="grid grid-cols-[40px_40px_40px] gap-x-[3px] gap-y-0.5 pt-1 pl-0.5">
					<button aria-label="Пауза" disabled className={`${control} border-[#c8c6ca]`}>
						<svg viewBox="0 0 14 16" className="h-4 w-[14px]"><path d="M1.500 1.500h4v13h-4zM7.500 1.500h4v13h-4z" fill="#b8b6ba" stroke="#98969a" /></svg>
					</button>
					<button aria-label="Непрерывно" className={`${control} border-[#003c74] bg-linear-to-b from-white to-[#f0f0f4]`}>
						<svg viewBox="0 0 30 22" className="h-[22px] w-[30px]"><path d="M1 11Q8-7 15 11T29 11" fill="none" stroke="#f00" strokeWidth="1.200" /></svg>
					</button>
					<button aria-label="Запись" className={`${control} border-red-600 bg-[#f4f4f6]`}>
						<svg viewBox="0 0 34 22" className="h-[22px] w-[34px]" fill="none">
							<path d="M1 4h1l1 6 2-3h2l2-4 2 7 2-3h2l2-4 2 7 2-3h2l2-4 2 7 2-3h2" stroke="#f00" />
							<path d="M1 17h4l1 2 2-6 2 4h3l1 2 2-6 2 4h3l1 2 2-6 2 4h3l1 2" stroke="#00f" />
							<path d="M34 4v7l-4-3.500zM34 13v7l-4-3.500z" fill="#000080" />
						</svg>
					</button>
					<button className={`${control} relative col-span-2 border-[#003c74] bg-linear-to-b from-white to-[#e4e4ea] pl-6 text-[12px] font-bold`}>
						<svg viewBox="0 0 10 20" className="absolute left-[9px] h-5 w-[10px]"><path d="M0 0l10 10L0 20z" fill="#00f000" stroke="#009000" strokeWidth="0.500" /></svg>
						Пуск
					</button>
					<output className="self-end text-center text-[13px] leading-4 font-bold text-[#008000]">13.71</output>
				</div>
			</Group>
		</div>
	);
}

/* ---------- window chrome ---------- */

function TitleBar() {
	const control =
		"flex h-5 w-5 items-center justify-center rounded-[2px] border border-[#a8ccf4] bg-linear-to-b from-[#78a8e4] to-[#3a6cc0]";
	return (
		<header className="flex h-[25px] items-center bg-linear-to-b from-[#8cc8f6] via-[#4488d8] to-[#2a54a8] pr-[3px] pl-0.5">
			<svg viewBox="0 0 16 16" className="mr-1 w-4">
				<path d="M0 0h16v16H0z" fill="#101070" />
				<path d="M1 8h3l1-4 1 8 2-10 1 11 2-8 1 3h3" fill="none" stroke="#fff" />
			</svg>
			<h1 className="font-['Noto_Sans'] text-[13px] font-bold text-white [text-shadow:1px_1px_1px_#1c3c80]">Diamag 2 (Акцент063 XX.dm2)</h1>
			<div className="ml-auto flex gap-[3px]">
				<button aria-label="Свернуть" className={control}>
					<svg viewBox="0 0 14 14" className="w-[14px]"><path d="M3 10h7v3H3z" fill="#fff" /></svg>
				</button>
				<button aria-label="Восстановить" className={control}>
					<svg viewBox="0 0 14 14" className="w-[14px]">
						<path d="M4.500 4V2.500h7v6H10M2.500 5.500h7v6h-7z" fill="none" stroke="#fff" strokeWidth="1.500" />
					</svg>
				</button>
				<button aria-label="Закрыть" className={control}>
					<svg viewBox="0 0 14 14" className="w-[14px]"><path d="M2 2l10 10M12 2L2 12" stroke="#fff" strokeWidth="2" /></svg>
				</button>
			</div>
		</header>
	);
}

export default function App() {
	const [tab, setTab] = useState(0);

	return (
		<div className="min-h-screen bg-white px-1 pt-[5px] font-['Liberation_Sans',Arial,sans-serif] text-black">
			<div className="relative bg-[#ebe9ed]">
				<TitleBar />
				<a href="http://diamag-osc.com" className="absolute top-[15px] right-[10px] z-10 text-[20px] leading-6 text-[#000080]">
					http://diamag-osc.com
				</a>

				<div className="flex h-6 items-start font-['DejaVu_Sans_Condensed','DejaVu_Sans',sans-serif] text-[11px]">
					<nav className="flex h-[23px] items-center gap-[7px] bg-white pr-[7px] pl-[5px]">
						<button>Файл</button>
						<button>Сервис</button>
						<button>Окна</button>
						<button>Помощь</button>
					</nav>
					<label htmlFor="order" className="ml-auto mr-[5px] leading-6 text-[#000080]">Порядок работы цилиндров</label>
					<div className="relative mt-px h-[21px] w-[98px] border border-[#808080] bg-white">
						<select id="order" className="block h-full w-full appearance-none pl-[3px] outline-none">
							<option>1-2-4-3</option>
						</select>
						<svg viewBox="0 0 7 4" className="pointer-events-none absolute right-[6px] top-2 w-[7px]"><path d="M0 0h7L3.500 4z" /></svg>
					</div>
					<div className="mt-px mr-[17px] ml-[3px] flex h-[21px] w-[35px] items-center border border-[#808080] bg-white">
						<input aria-label="Номер цилиндра" defaultValue="1" className="w-5 min-w-0 pl-[6px] outline-none" />
						<svg viewBox="0 0 7 14" className="w-[7px]"><path d="M3.500 1L7 5H0zM0 9h7l-3.500 4z" /></svg>
					</div>
				</div>

				<div role="tablist" className="flex h-[22px] items-end gap-px border-b border-[#808080] text-[11px]">
					{TABS.map(({ title, width }, i) => (
						<button
							key={title}
							role="tab"
							aria-selected={i === tab}
							onClick={() => setTab(i)}
							className={`shrink-0 rounded-t-[3px] border border-b-0 border-[#808080] whitespace-nowrap ${width} ${
								i === tab
									? "-mb-px h-[23px] bg-[#ebe9ed]"
									: "h-5 bg-linear-to-b from-white to-[#f0eef2]"
							}`}
						>
							{title}
						</button>
					))}
				</div>

				<main className="border-r border-l border-[#808080]">
					<Toolbar />
					<div className="h-px bg-white" />
					<Scope />
					<ScrollRow />
					<div className="mr-[409px] ml-[409px] flex h-[7px] items-center gap-1 border border-[#9c9a9e] px-1">
						<svg viewBox="0 0 7 4" className="w-[7px]"><path d="M0 0h7L3.500 4z" fill="#2f5fae" /></svg>
						<div className="grow border-t border-dotted border-[#2f5fae]" />
						<svg viewBox="0 0 7 4" className="w-[7px]"><path d="M0 0h7L3.500 4z" fill="#2f5fae" /></svg>
					</div>
					<ControlPanel />
					<div className="h-[3px] border-b border-[#808080]" />
				</main>

				<footer className="mt-[2px] flex h-[17px] gap-[3px] font-['DejaVu_Sans_Condensed','DejaVu_Sans',sans-serif] text-[11px] leading-4">
					<div className="w-[190px] border-t border-l border-[#9c9a9e] pl-[3px]">USB Осциллограф не подключен</div>
					<div className="grow border-t border-l border-[#9c9a9e]" />
					<div className="w-12 border-t border-l border-[#9c9a9e] pl-0.5">1.5</div>
				</footer>
				<div className="h-1 border-t border-[#102018] bg-[#6a9cc9]" />
			</div>
		</div>
	);
}
